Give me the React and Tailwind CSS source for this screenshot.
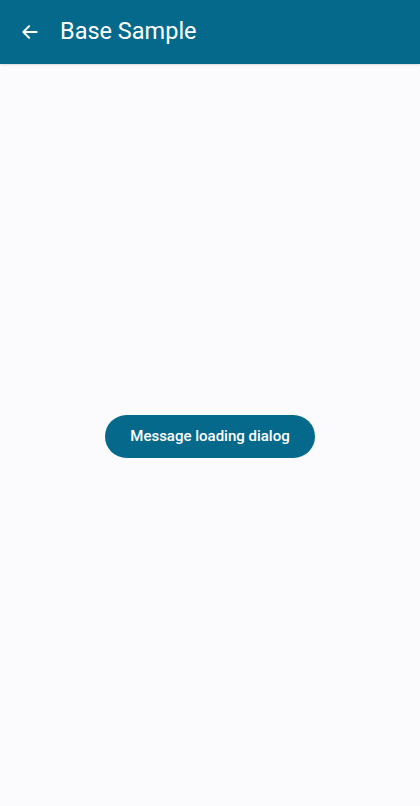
import React from 'react'

const App = () => {
  return (
    <div className="min-h-screen flex flex-col bg-[#fbfbfd]" style={{ fontFamily: 'Roboto, "Noto Sans", sans-serif' }}>
      <header className="h-16 bg-[#05698c] flex items-center px-5 shadow-sm">
        <svg width="20" height="20" viewBox="0 0 24 24" fill="none" stroke="white" strokeWidth="2.4" strokeLinecap="round" strokeLinejoin="round">
          <path d="M20 12H5" />
          <path d="M11 5l-7 7 7 7" />
        </svg>
        <h1 className="ml-[20px] text-white text-[23.5px] leading-none">Base Sample</h1>
      </header>
      <main className="flex-1 flex items-start justify-center pt-[351px]">
        <button className="w-[210px] h-[43px] rounded-full bg-[#05698c] text-white text-[15px] font-medium">
          Message loading dialog
        </button>
      </main>
    </div>
  )
}

export default App
